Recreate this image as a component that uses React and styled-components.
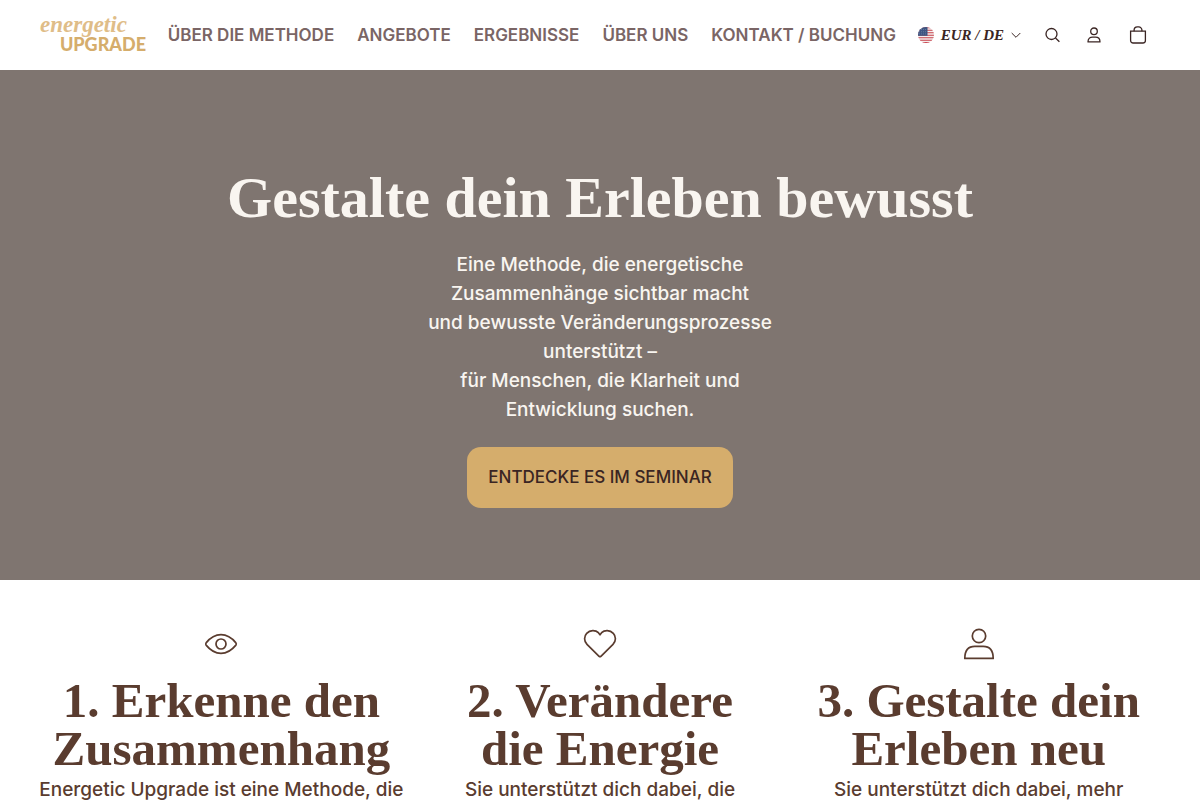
import React from "react";
import styled, { createGlobalStyle } from "styled-components";

const GlobalStyle = createGlobalStyle`
  * {
    box-sizing: border-box;
  }
  body {
    margin: 0;
    background: #ffffff;
    color: #5a3c2f;
    font-family: Inter, "Liberation Sans", sans-serif;
    font-size: 19px;
    font-weight: 500;
  }
  h1, h2, p {
    margin: 0;
  }
`;

const Header = styled.header`
  display: flex;
  align-items: center;
  justify-content: space-between;
  height: 70px;
  padding: 0 53px 0 40px;
`;

const Logo = styled.a`
  display: flex;
  flex-direction: column;
  width: 106px;
  color: #d5ad6c;
  text-decoration: none;
`;

const LogoScript = styled.span`
  color: #dfbd88;
  font-family: "Liberation Serif", serif;
  font-size: 23px;
  font-style: italic;
  font-weight: 700;
  line-height: 18px;
`;

const LogoBold = styled.span`
  align-self: flex-end;
  font-family: Lato, sans-serif;
  font-size: 18px;
  font-weight: 900;
  line-height: 20px;
`;

const Nav = styled.nav`
  display: flex;
  gap: 23px;
`;

const NavLink = styled.a`
  color: #7a6565;
  font-size: 17px;
  font-weight: 600;
  text-decoration: none;
  white-space: nowrap;
`;

const Tools = styled.div`
  display: flex;
  align-items: center;
  gap: 24px;
`;

const PlainButton = styled.button`
  display: flex;
  align-items: center;
  gap: 7px;
  padding: 0;
  border: 0;
  background: none;
  color: #3a2523;
  cursor: pointer;
`;

const Currency = styled.span`
  font-family: "Liberation Serif", serif;
  font-size: 15px;
  font-style: italic;
  font-weight: 700;
  white-space: nowrap;
`;

const Hero = styled.section`
  display: flex;
  flex-direction: column;
  align-items: center;
  padding: 94px 40px 72px;
  background: #7f7570;
  color: #f9f5f0;
  text-align: center;
`;

const HeroTitle = styled.h1`
  font-family: "Liberation Serif", serif;
  font-size: 58px;
  font-weight: 700;
  line-height: 68px;
`;

const HeroText = styled.p`
  margin-top: 18px;
  line-height: 29px;
`;

const HeroLink = styled.a`
  margin-top: 23px;
  padding: 16px 21px;
  border-radius: 14px;
  background: #d5ad6c;
  color: #3a2523;
  font-size: 17px;
  line-height: 29px;
  text-decoration: none;
`;

const Steps = styled.section`
  display: grid;
  grid-template-columns: repeat(3, minmax(0, 1fr));
  gap: 16px;
  padding: 44px 40px 0;
`;

const Step = styled.article`
  display: flex;
  flex-direction: column;
  align-items: center;
  text-align: center;
`;

const StepTitle = styled.h2`
  margin-top: 13px;
  font-family: "Liberation Serif", serif;
  font-size: 49px;
  font-weight: 700;
  line-height: 48px;
  white-space: nowrap;
`;

const StepText = styled.p`
  margin-top: 2px;
  line-height: 29px;
  white-space: nowrap;
`;

const links = ["ÜBER DIE METHODE", "ANGEBOTE", "ERGEBNISSE", "ÜBER UNS", "KONTAKT / BUCHUNG"];

const heroLines = [
  "Eine Methode, die energetische",
  "Zusammenhänge sichtbar macht",
  "und bewusste Veränderungsprozesse",
  "unterstützt –",
  "für Menschen, die Klarheit und",
  "Entwicklung suchen.",
];

const steps = [
  { icon: EyeIcon, title: ["1. Erkenne den", "Zusammenhang"], text: "Energetic Upgrade ist eine Methode, die" },
  { icon: HeartIcon, title: ["2. Verändere", "die Energie"], text: "Sie unterstützt dich dabei, die" },
  { icon: PersonIcon, title: ["3. Gestalte dein", "Erleben neu"], text: "Sie unterstützt dich dabei, mehr" },
];

function FlagIcon() {
  return (
    <svg width="16" height="16" viewBox="0 0 16 16" aria-hidden="true">
      <clipPath id="flag">
        <circle cx="8" cy="8" r="8" />
      </clipPath>
      <g clipPath="url(#flag)">
        <rect width="16" height="16" fill="#f3eeee" />
        <path d="M0 .7h16M0 3.2h16M0 5.7h16M0 8.2h16M0 10.7h16M0 13.2h16M0 15.5h16" stroke="#c8414b" strokeWidth="1.1" />
        <rect width="9.5" height="8.8" fill="#3d5582" />
        <path d="M1 2.5h8M1 4.7h8M1 6.9h8" stroke="#8d9bb8" strokeWidth=".7" strokeDasharray=".7 1.3" />
      </g>
    </svg>
  );
}

function ChevronIcon() {
  return (
    <svg width="10" height="16" viewBox="0 0 10 16" fill="none" stroke="currentColor" aria-hidden="true">
      <path d="M.7 6L5 10.3 9.3 6" />
    </svg>
  );
}

function SearchIcon() {
  return (
    <svg width="18" height="18" viewBox="0 0 18 18" fill="none" stroke="currentColor" strokeWidth="1.3" aria-hidden="true">
      <circle cx="6.5" cy="8" r="5.5" />
      <path d="M10.5 12l3.9 3.7" />
    </svg>
  );
}

function AccountIcon() {
  return (
    <svg width="18" height="18" viewBox="0 0 18 18" fill="none" stroke="currentColor" strokeWidth="1.3" aria-hidden="true">
      <circle cx="7" cy="5.3" r="3.3" />
      <path d="M1 15.9c0-3.2 2.2-4.7 4.5-4.7h3c2.3 0 4.5 1.5 4.5 4.7z" strokeLinejoin="round" />
    </svg>
  );
}

function BagIcon() {
  return (
    <svg width="18" height="18" viewBox="0 0 18 18" fill="none" stroke="currentColor" strokeWidth="1.3" aria-hidden="true">
      <path d="M1.6 5.2h14.8v9.3a2.5 2.5 0 0 1-2.5 2.5H4.1a2.5 2.5 0 0 1-2.5-2.5z" />
      <path d="M5.1 5.2V4.1A3.2 3.2 0 0 1 8.3.9h1.4a3.2 3.2 0 0 1 3.2 3.2v1.1" />
    </svg>
  );
}

function EyeIcon() {
  return (
    <svg width="40" height="40" viewBox="0 0 40 40" fill="none" stroke="currentColor" strokeWidth="1.7" aria-hidden="true">
      <path d="M5.1 18.900C9.500 13.500 14.600 10.700 20 10.700s10.500 2.800 14.900 8.200q.8 1.100 0 2.200C30.500 26.500 25.400 29.300 20 29.300S9.500 26.500 5.100 21.100q-.8-1.100 0-2.200z" />
      <circle cx="20" cy="20" r="5" />
    </svg>
  );
}

function HeartIcon() {
  return (
    <svg width="40" height="40" viewBox="0 0 40 40" fill="none" stroke="currentColor" strokeWidth="1.7" strokeLinejoin="round" aria-hidden="true">
      <path d="M19.1 32.3L7 20.3C3.8 17.1 3.900 12.200 6.700 9.300c3.300-3.400 8.800-3.400 11.700-.6L20 10.800l1.600-2.100c2.900-2.800 8.400-2.800 11.700.6 2.800 2.900 2.900 7.800-.3 11l-12.100 12q-.9.8-1.800 0z" />
    </svg>
  );
}

function PersonIcon() {
  return (
    <svg width="40" height="40" viewBox="0 0 40 40" fill="none" stroke="currentColor" strokeWidth="1.7" strokeLinejoin="round" aria-hidden="true">
      <circle cx="20" cy="12" r="6.7" />
      <path d="M5.8 34.4c0-8.2 3.8-12.1 10-12.1h8.4c6.2 0 10 3.9 10 12.1z" />
    </svg>
  );
}

function App() {
  return (
    <>
      <GlobalStyle />
      <Header>
        <Logo href="#">
          <LogoScript>energetic</LogoScript>
          <LogoBold>UPGRADE</LogoBold>
        </Logo>
        <Nav>
          {links.map((link) => (
            <NavLink href="#" key={link}>{link}</NavLink>
          ))}
        </Nav>
        <Tools>
          <PlainButton type="button">
            <FlagIcon />
            <Currency>EUR / DE</Currency>
            <ChevronIcon />
          </PlainButton>
          <PlainButton type="button" aria-label="Suche"><SearchIcon /></PlainButton>
          <PlainButton type="button" aria-label="Konto"><AccountIcon /></PlainButton>
          <PlainButton type="button" aria-label="Warenkorb"><BagIcon /></PlainButton>
        </Tools>
      </Header>
      <main>
        <Hero>
          <HeroTitle>Gestalte dein Erleben bewusst</HeroTitle>
          <HeroText>
            {heroLines.map((line) => (
              <React.Fragment key={line}>{line}<br /></React.Fragment>
            ))}
          </HeroText>
          <HeroLink href="#">ENTDECKE ES IM SEMINAR</HeroLink>
        </Hero>
        <Steps>
          {steps.map(({ icon: Icon, title, text }) => (
            <Step key={text}>
              <Icon />
              <StepTitle>{title[0]}<br />{title[1]}</StepTitle>
              <StepText>{text}</StepText>
            </Step>
          ))}
        </Steps>
      </main>
    </>
  );
}

export default App;
